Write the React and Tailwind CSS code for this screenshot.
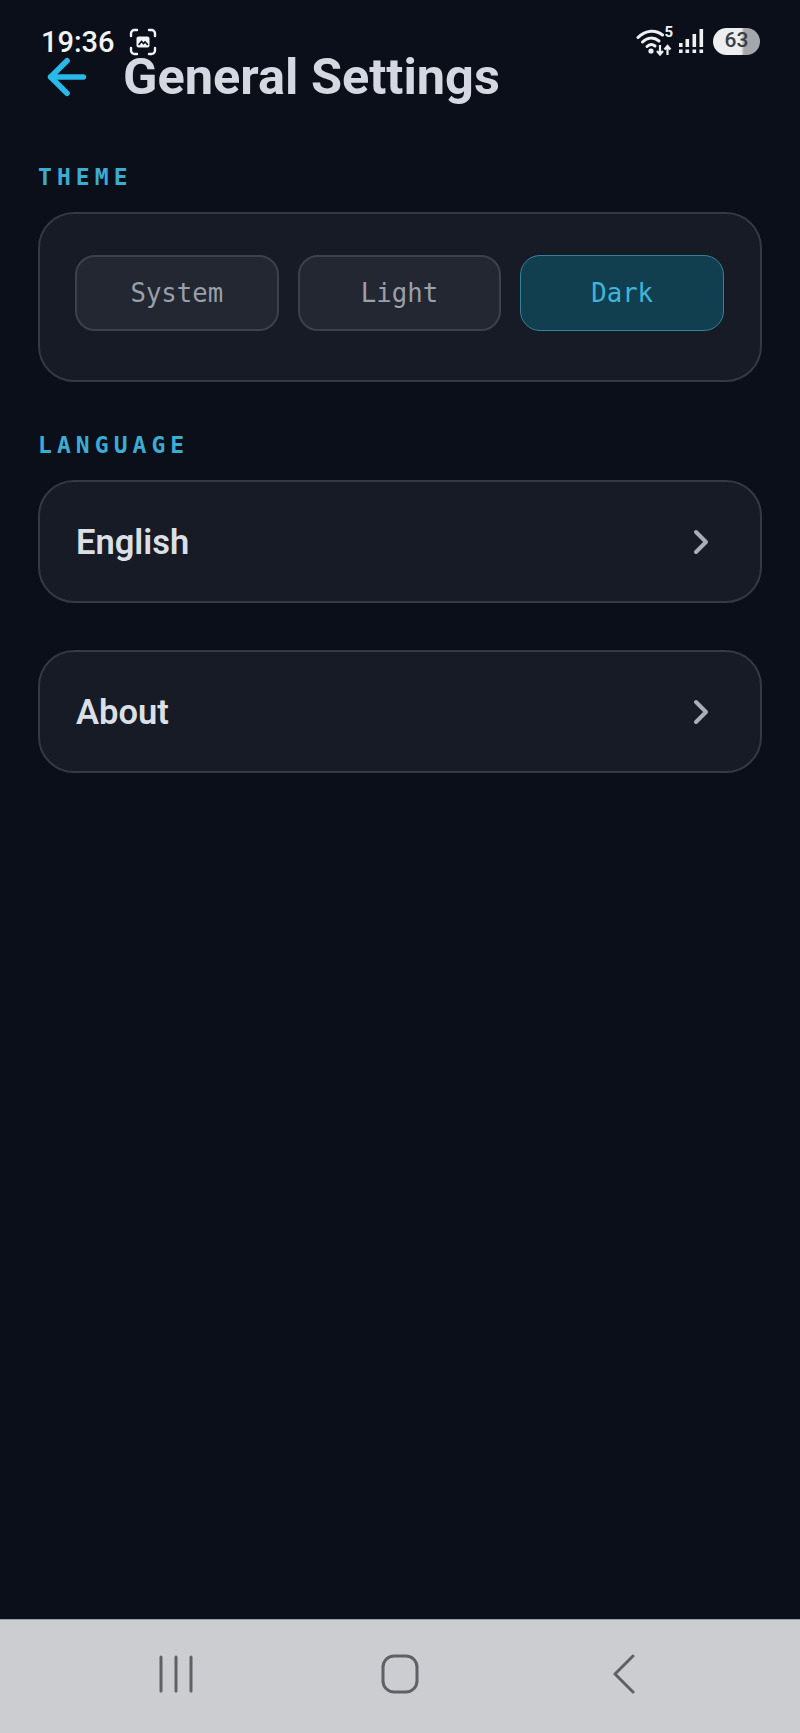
import { ArrowLeft, ChevronRight } from "lucide-react";

const THEMES = [
  { id: "system", label: "System" },
  { id: "light", label: "Light" },
  { id: "dark", label: "Dark", active: true },
];

function WifiIcon() {
  return (
    <svg width="36" height="30" viewBox="0 0 36 30" fill="none" className="text-[#eef0f2]">
      <path d="M2 11.5C10 3.5 20 3.5 26.500 9" stroke="currentColor" strokeWidth="3" strokeLinecap="round" />
      <path d="M6.5 16C11.5 11 18 11 23 15" stroke="currentColor" strokeWidth="3" strokeLinecap="round" />
      <path d="M11 20.5C13.5 18 16.5 18 19 20" stroke="currentColor" strokeWidth="3" strokeLinecap="round" />
      <circle cx="15" cy="25" r="2.600" fill="currentColor" />
      <path d="M24 19V28M21 25L24 28.5L27 25" stroke="currentColor" strokeWidth="2.200" />
      <path d="M31.500 29V20M28.500 23.500L31.500 20L34.500 23.500" stroke="currentColor" strokeWidth="2.200" />
    </svg>
  );
}

function SignalIcon() {
  return (
    <svg width="26" height="26" viewBox="0 0 26 26" fill="currentColor" className="text-[#eef0f2]">
      <rect x="1" y="15" width="3.600" height="4" />
      <rect x="1" y="21.5" width="3.600" height="3.500" />
      <rect x="7.500" y="11" width="3.600" height="8" />
      <rect x="7.500" y="21.5" width="3.600" height="3.500" />
      <rect x="14.500" y="6" width="3.600" height="13" />
      <rect x="14.500" y="21.5" width="3.600" height="3.500" />
      <rect x="21.500" y="1" width="3.600" height="18" />
      <rect x="21.500" y="21.5" width="3.600" height="3.500" />
    </svg>
  );
}

function StatusBar() {
  return (
    <div className="absolute top-0 left-0 right-0 h-[60px] flex items-start justify-between pl-[41px] pr-[40px] pt-[27px] text-[#f2f3f5]">
      <div className="flex items-center gap-[14px]">
        <span className="font-['Roboto',sans-serif] font-medium text-[29px] leading-[30px]">19:36</span>
        <svg width="28" height="28" viewBox="0 0 28 28" fill="none" stroke="currentColor" strokeWidth="2.4" strokeLinecap="round">
          <path d="M2 8V5.5A3.5 3.5 0 0 1 5.500 2H8" />
          <path d="M20 2H22.500A3.500 3.500 0 0 1 26 5.500V8" />
          <path d="M26 20V22.500A3.500 3.500 0 0 1 22.500 26H20" />
          <path d="M8 26H5.500A3.500 3.500 0 0 1 2 22.500V20" />
          <rect x="7.500" y="8.500" width="13" height="11" rx="2" fill="currentColor" stroke="none" />
          <path d="M10 16.500L12.500 13.500L14.500 15.500L16 14L18.500 16.500" stroke="#0a0f1a" strokeWidth="1.600" />
        </svg>
      </div>
      <div className="flex items-center mt-[-1px]">
        <div className="relative w-[36px] h-[30px] mr-[6px]">
          <WifiIcon />
          <span className="absolute top-[-2px] right-[-1px] font-['Roboto',sans-serif] font-bold text-[15px] leading-[16px]">5</span>
        </div>
        <SignalIcon />
        <span className="ml-[9px] w-[47px] h-[27px] rounded-full bg-[linear-gradient(90deg,#eceef0_0%,#eceef0_60%,#a4a7ab_66%,#a4a7ab_100%)] flex items-center justify-center font-['Roboto',sans-serif] font-medium text-[21px] text-[#3b3e44]">
          63
        </span>
      </div>
    </div>
  );
}

function SectionLabel({ children }) {
  return (
    <h2 className="font-['DejaVu_Sans_Mono',monospace] font-bold text-[23px] leading-[26px] tracking-[0.22em] text-[#3cacd2]">
      {children}
    </h2>
  );
}

function RowCard({ label, className }) {
  return (
    <button className={`w-full h-[123px] flex items-center justify-between pl-[36px] pr-[39px] rounded-[36px] bg-[#161b26] border-2 border-[#343944] ${className}`}>
      <span className="pt-[2px] font-['Roboto',sans-serif] font-semibold text-[34.500px] text-[#dcdfe6]">{label}</span>
      <ChevronRight size={40} strokeWidth={2.4} className="text-[#a9aeb8]" />
    </button>
  );
}

export default function App() {
  return (
    <div className="relative w-[800px] h-[1733px] flex flex-col bg-[#0a0f1a]">
      <StatusBar />

      <main className="flex-1 px-[38px] pt-[49px]">
        {/* Header */}
        <div className="flex items-center h-[56px]">
          <ArrowLeft size={56} strokeWidth={2.4} className="text-[#28b9e8] ml-[1px]" />
          <h1 className="ml-[28px] font-['Roboto',sans-serif] font-bold text-[50.500px] leading-[56px] text-[#d5d8e0] whitespace-nowrap">
            General Settings
          </h1>
        </div>

        <div className="mt-[59px]">
          <SectionLabel>THEME</SectionLabel>
          <div className="mt-[22px] h-[170px] pl-[35px] pr-[36px] pt-[41px] rounded-[36px] bg-[#161b26] border-2 border-[#343944]">
            <div className="grid grid-cols-3 gap-[19px]">
              {THEMES.map((t) => (
                <button
                  key={t.id}
                  className={`h-[76px] rounded-[20px] font-['DejaVu_Sans_Mono',monospace] text-[25.700px] ${
                    t.active
                      ? "bg-[#123f50] border-[1.500px] border-[#35839b] text-[#3fb5da]"
                      : "bg-[#232732] border-2 border-[#3c414c] text-[#9a9fa9]"
                  }`}
                >
                  {t.label}
                </button>
              ))}
            </div>
          </div>
        </div>

        <div className="mt-[50px]">
          <SectionLabel>LANGUAGE</SectionLabel>
          <RowCard label="English" className="mt-[22px]" />
        </div>

        <RowCard label="About" className="mt-[47px]" />
      </main>

      {/* Android nav bar */}
      <nav className="h-[114px] bg-[#cbcdd1] border-t border-[#9da0a6] grid grid-cols-3 items-center text-[#5e6066]">
        <svg width="38" height="38" viewBox="0 0 38 38" fill="none" stroke="currentColor" strokeWidth="3" strokeLinecap="round" className="justify-self-start ml-[157px] mb-[6px]">
          <path d="M4 2V36M19 2V36M34 2V36" />
        </svg>
        <svg width="38" height="40" viewBox="0 0 38 40" fill="none" stroke="currentColor" strokeWidth="3" className="justify-self-center mb-[6px]">
          <rect x="2" y="2" width="34" height="36" rx="11" />
        </svg>
        <svg width="26" height="40" viewBox="0 0 26 40" fill="none" stroke="currentColor" strokeWidth="3" strokeLinecap="round" strokeLinejoin="round" className="justify-self-start ml-[78px] mb-[6px]">
          <path d="M22 2L4 20L22 38" />
        </svg>
      </nav>
    </div>
  );
}
